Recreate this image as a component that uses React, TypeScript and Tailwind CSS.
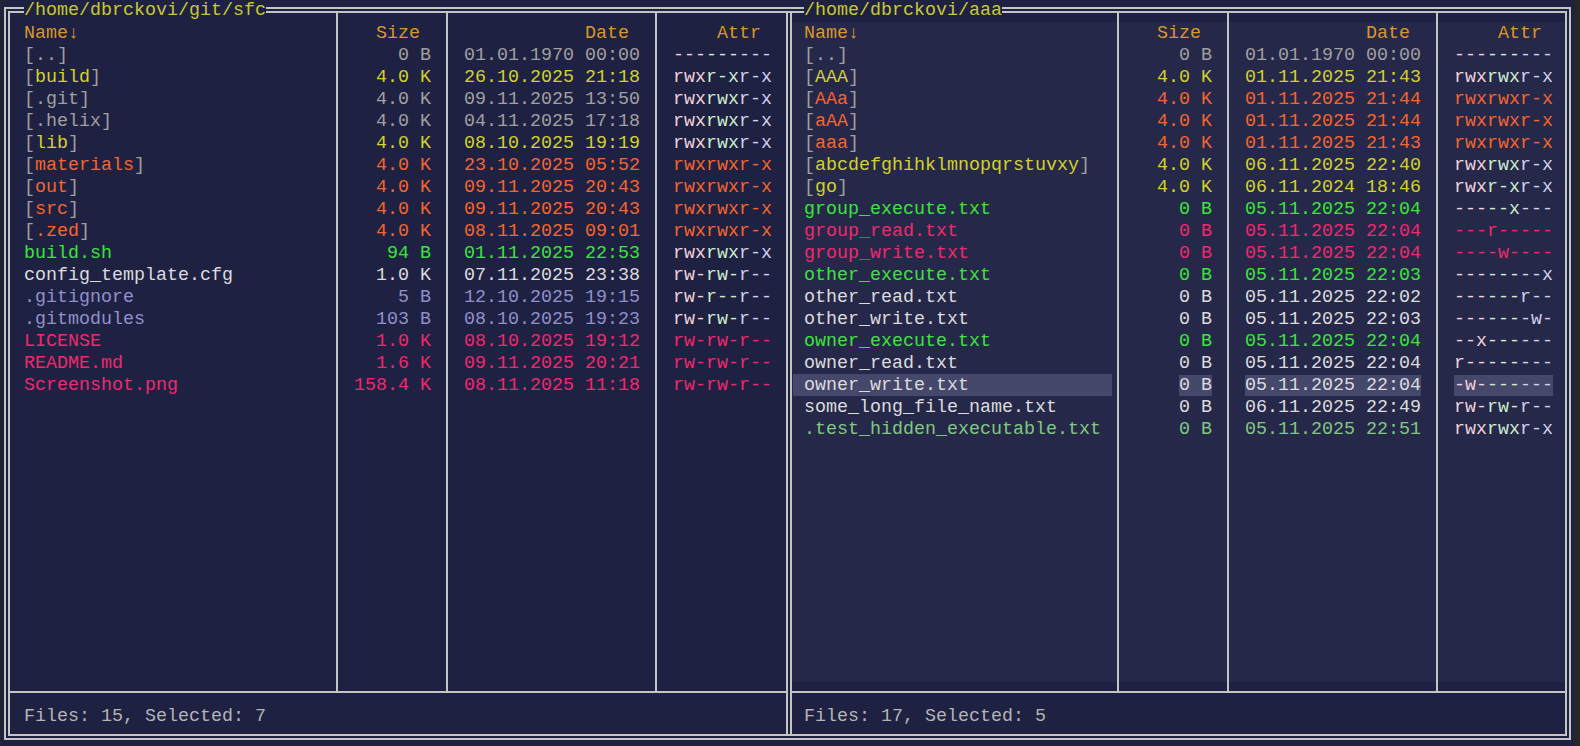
import type { ReactNode } from 'react'

type Tone = 'gray' | 'yellow' | 'orange' | 'green' | 'white' | 'lav' | 'pink' | 'mint'

interface Entry {
  name: string
  dir?: boolean
  tone: Tone
  size: string
  date: string
  attr: string
  cursor?: boolean
}

const toneText: Record<Tone, string> = {
  gray: 'text-[#a0a0a0]',
  yellow: 'text-[#d2d22a]',
  orange: 'text-[#f5652d]',
  green: 'text-[#3ce43c]',
  white: 'text-[#dcdcdc]',
  lav: 'text-[#9090cc]',
  pink: 'text-[#f0286e]',
  mint: 'text-[#80c880]',
}

// owner / group / other triplets of the permission string
const attrTri = ['text-[#f0d2da]', 'text-[#cdeccd]', 'text-[#d0d0f0]']

const leftRows: Entry[] = [
  { name: '..', dir: true, tone: 'gray', size: '0 B', date: '01.01.1970 00:00', attr: '---------' },
  { name: 'build', dir: true, tone: 'yellow', size: '4.0 K', date: '26.10.2025 21:18', attr: 'rwxr-xr-x' },
  { name: '.git', dir: true, tone: 'gray', size: '4.0 K', date: '09.11.2025 13:50', attr: 'rwxrwxr-x' },
  { name: '.helix', dir: true, tone: 'gray', size: '4.0 K', date: '04.11.2025 17:18', attr: 'rwxrwxr-x' },
  { name: 'lib', dir: true, tone: 'yellow', size: '4.0 K', date: '08.10.2025 19:19', attr: 'rwxrwxr-x' },
  { name: 'materials', dir: true, tone: 'orange', size: '4.0 K', date: '23.10.2025 05:52', attr: 'rwxrwxr-x' },
  { name: 'out', dir: true, tone: 'orange', size: '4.0 K', date: '09.11.2025 20:43', attr: 'rwxrwxr-x' },
  { name: 'src', dir: true, tone: 'orange', size: '4.0 K', date: '09.11.2025 20:43', attr: 'rwxrwxr-x' },
  { name: '.zed', dir: true, tone: 'orange', size: '4.0 K', date: '08.11.2025 09:01', attr: 'rwxrwxr-x' },
  { name: 'build.sh', tone: 'green', size: '94 B', date: '01.11.2025 22:53', attr: 'rwxrwxr-x' },
  { name: 'config_template.cfg', tone: 'white', size: '1.0 K', date: '07.11.2025 23:38', attr: 'rw-rw-r--' },
  { name: '.gitignore', tone: 'lav', size: '5 B', date: '12.10.2025 19:15', attr: 'rw-r--r--' },
  { name: '.gitmodules', tone: 'lav', size: '103 B', date: '08.10.2025 19:23', attr: 'rw-rw-r--' },
  { name: 'LICENSE', tone: 'pink', size: '1.0 K', date: '08.10.2025 19:12', attr: 'rw-rw-r--' },
  { name: 'README.md', tone: 'pink', size: '1.6 K', date: '09.11.2025 20:21', attr: 'rw-rw-r--' },
  { name: 'Screenshot.png', tone: 'pink', size: '158.4 K', date: '08.11.2025 11:18', attr: 'rw-rw-r--' },
]

const rightRows: Entry[] = [
  { name: '..', dir: true, tone: 'gray', size: '0 B', date: '01.01.1970 00:00', attr: '---------' },
  { name: 'AAA', dir: true, tone: 'yellow', size: '4.0 K', date: '01.11.2025 21:43', attr: 'rwxrwxr-x' },
  { name: 'AAa', dir: true, tone: 'orange', size: '4.0 K', date: '01.11.2025 21:44', attr: 'rwxrwxr-x' },
  { name: 'aAA', dir: true, tone: 'orange', size: '4.0 K', date: '01.11.2025 21:44', attr: 'rwxrwxr-x' },
  { name: 'aaa', dir: true, tone: 'orange', size: '4.0 K', date: '01.11.2025 21:43', attr: 'rwxrwxr-x' },
  { name: 'abcdefghihklmnopqrstuvxy', dir: true, tone: 'yellow', size: '4.0 K', date: '06.11.2025 22:40', attr: 'rwxrwxr-x' },
  { name: 'go', dir: true, tone: 'yellow', size: '4.0 K', date: '06.11.2024 18:46', attr: 'rwxr-xr-x' },
  { name: 'group_execute.txt', tone: 'green', size: '0 B', date: '05.11.2025 22:04', attr: '-----x---' },
  { name: 'group_read.txt', tone: 'pink', size: '0 B', date: '05.11.2025 22:04', attr: '---r-----' },
  { name: 'group_write.txt', tone: 'pink', size: '0 B', date: '05.11.2025 22:04', attr: '----w----' },
  { name: 'other_execute.txt', tone: 'green', size: '0 B', date: '05.11.2025 22:03', attr: '--------x' },
  { name: 'other_read.txt', tone: 'white', size: '0 B', date: '05.11.2025 22:02', attr: '------r--' },
  { name: 'other_write.txt', tone: 'white', size: '0 B', date: '05.11.2025 22:03', attr: '-------w-' },
  { name: 'owner_execute.txt', tone: 'green', size: '0 B', date: '05.11.2025 22:04', attr: '--x------' },
  { name: 'owner_read.txt', tone: 'white', size: '0 B', date: '05.11.2025 22:04', attr: 'r--------' },
  { name: 'owner_write.txt', tone: 'white', size: '0 B', date: '05.11.2025 22:04', attr: '-w-------', cursor: true },
  { name: 'some_long_file_name.txt', tone: 'white', size: '0 B', date: '06.11.2025 22:49', attr: 'rw-rw-r--' },
  { name: '.test_hidden_executable.txt', tone: 'mint', size: '0 B', date: '05.11.2025 22:51', attr: 'rwxrwxr-x' },
]

const line = 'border-[#c4c4c4]'
const cursorBg = 'bg-[#45476b]'

function Column({ width, active, children }: { width: string; active: boolean; children: ReactNode }) {
  return (
    <div className={`${width} h-full border-r-2 ${line} pt-[9px] pb-[9px]`}>
      <div className={`h-full ${active ? 'bg-[#262849]' : ''}`}>{children}</div>
    </div>
  )
}

function Attr({ e }: { e: Entry }) {
  // selected rows take their own colour for the whole string
  if (e.tone === 'orange' || e.tone === 'pink') {
    return <span className={toneText[e.tone]}>{e.attr}</span>
  }
  return (
    <>
      {e.attr.split('').map((ch, i) => (
        <span key={i} className={attrTri[Math.floor(i / 3)]}>
          {ch}
        </span>
      ))}
    </>
  )
}

function Name({ e }: { e: Entry }) {
  if (!e.dir) return <span className={toneText[e.tone]}>{e.name}</span>
  return (
    <>
      <span className="text-[#a0a0a0]">[</span>
      <span className={toneText[e.tone]}>{e.name}</span>
      <span className="text-[#a0a0a0]">]</span>
    </>
  )
}

function Panel({
  title,
  rows,
  footer,
  active,
  left,
}: {
  title: string
  rows: Entry[]
  footer: string
  active: boolean
  left: boolean
}) {
  const head = 'h-[22px] text-[#d9962b]'
  return (
    <div className={`relative flex flex-col h-full ${left ? 'w-[776px]' : 'flex-1'}`}>
      <div
        className={`absolute top-[-14px] h-[22px] bg-[#1f2142] text-[#c8c832] ${left ? 'left-[14px]' : 'left-[12px]'}`}
      >
        {title}
      </div>

      <div className="flex h-[678px]">
        <Column width={left ? 'w-[328px]' : 'w-[327px]'} active={active}>
          <div className={`${head} ${left ? 'ml-[14px]' : 'ml-[12px]'}`}>Name↓</div>
          {rows.map((e) => (
            <div
              key={e.name}
              className={`h-[22px] w-[319px] ${left ? 'ml-[2px] pl-[12px]' : 'ml-[1px] pl-[11px]'} ${e.cursor ? cursorBg : ''}`}
            >
              <Name e={e} />
            </div>
          ))}
        </Column>

        <Column width="w-[110px]" active={active}>
          <div className={`${head} text-right pr-[26px]`}>Size</div>
          {rows.map((e) => (
            <div key={e.name} className="h-[22px] text-right pr-[15px]">
              <span className={`${toneText[e.tone]} ${e.cursor ? cursorBg : ''}`}>{e.size}</span>
            </div>
          ))}
        </Column>

        <Column width="w-[209px]" active={active}>
          <div className={`${head} pl-[16px] w-[192px] text-right pr-[11px]`}>Date</div>
          {rows.map((e) => (
            <div key={e.name} className="h-[22px] pl-[16px]">
              <span className={`${toneText[e.tone]} ${e.cursor ? cursorBg : ''}`}>{e.date}</span>
            </div>
          ))}
        </Column>

        <div className={`${left ? 'w-[129px]' : 'flex-1'} h-full pt-[9px] pb-[9px]`}>
          <div className={`h-full ${active ? 'bg-[#262849]' : ''}`}>
            <div className={`${head} pl-[60px]`}>Attr</div>
            {rows.map((e) => (
              <div key={e.name} className="h-[22px] pl-[16px]">
                <span className={e.cursor ? cursorBg : ''}>
                  <Attr e={e} />
                </span>
              </div>
            ))}
          </div>
        </div>
      </div>

      <div className="h-[2px] bg-[#c4c4c4]" />
      <div className={`h-[41px] pt-[12px] text-[#b4b4b4] ${left ? 'pl-[14px]' : 'pl-[12px]'}`}>
        <div className="h-[22px]">{footer}</div>
      </div>
    </div>
  )
}

export default function App() {
  return (
    <div
      className="w-[1580px] h-[746px] overflow-hidden bg-[#1f2142] border-l border-r-[6px] border-[#262626] pt-[7px] text-[18.33px] leading-[24px] whitespace-pre"
      style={{ fontFamily: '"Liberation Mono", "DejaVu Sans Mono", monospace' }}
    >
      <div className={`ml-[3px] w-[1567px] h-[733px] border-[6px] border-double ${line} flex`}>
        <Panel
          title="/home/dbrckovi/git/sfc"
          rows={leftRows}
          footer="Files: 15, Selected: 7"
          active={false}
          left
        />
        <div className={`w-[6px] h-full border-x-2 ${line}`} />
        <Panel
          title="/home/dbrckovi/aaa"
          rows={rightRows}
          footer="Files: 17, Selected: 5"
          active
          left={false}
        />
      </div>
    </div>
  )
}
